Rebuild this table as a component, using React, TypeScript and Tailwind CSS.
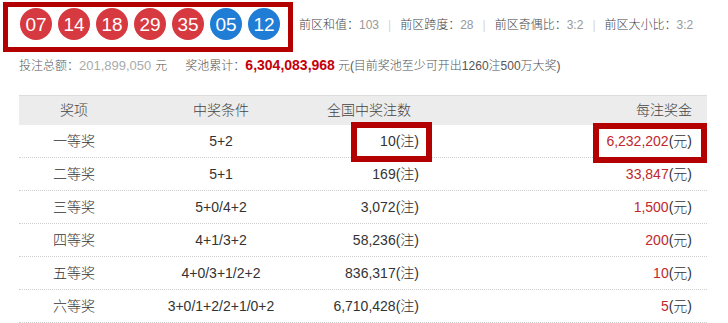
import React from "react";

const FONT = { fontFamily: '"Liberation Sans", Arial, "Noto Sans CJK SC", sans-serif' };

const balls: { n: string; blue?: boolean }[] = [
  { n: "07" },
  { n: "14" },
  { n: "18" },
  { n: "29" },
  { n: "35" },
  { n: "05", blue: true },
  { n: "12", blue: true },
];

const rows = [
  { name: "一等奖", cond: "5+2", count: "10", prize: "6,232,202" },
  { name: "二等奖", cond: "5+1", count: "169", prize: "33,847" },
  { name: "三等奖", cond: "5+0/4+2", count: "3,072", prize: "1,500" },
  { name: "四等奖", cond: "4+1/3+2", count: "58,236", prize: "200" },
  { name: "五等奖", cond: "4+0/3+1/2+2", count: "836,317", prize: "10" },
  { name: "六等奖", cond: "3+0/1+2/2+1/0+2", count: "6,710,428", prize: "5" },
];

function Stat({ label, value }: { label: string; value: string }) {
  return (
    <span>
      <span className="text-[#444]">{label}</span>
      <span className="text-[#999]">{value}</span>
    </span>
  );
}

function Sep() {
  return <span className="mx-[9px] text-[#d6d6d6]">|</span>;
}

export default function App() {
  return (
    <div className="relative w-[728px] h-[323px] overflow-hidden bg-white text-[#333] font-light" style={FONT}>
      <div className="flex items-start pt-[2px]">
        <div className="ml-[3px] w-[290px] h-[50px] border-[5px] border-[#b30000] flex items-start pt-[1px] pl-[12px] gap-[6px]">
          {balls.map((b, i) => (
            <div
              key={i}
              className={`w-[32px] h-[32px] rounded-full flex items-center justify-center text-white text-[19px] font-normal leading-none ${
                b.blue ? "bg-[#1f7dd5]" : "bg-[#d6393f]"
              }`}
            >
              {b.n}
            </div>
          ))}
        </div>
        <div className="ml-[6px] mt-[14px] text-[12px] leading-[18px] whitespace-nowrap">
          <Stat label="前区和值：" value="103" />
          <Sep />
          <Stat label="前区跨度：" value="28" />
          <Sep />
          <Stat label="前区奇偶比：" value="3:2" />
          <Sep />
          <Stat label="前区大小比：" value="3:2" />
        </div>
      </div>

      <div className="mt-[4px] pl-[19px] text-[12px] leading-[18px] whitespace-nowrap text-[#555] flex items-baseline">
        <span>投注总额：</span>
        <span className="text-[#aaa] text-[13px]">201,899,050</span>
        <span className="ml-[4px]">元</span>
        <span className="ml-[18px]">奖池累计：</span>
        <span className="font-bold text-[#c4000b] text-[14px]">6,304,083,968</span>
        <span className="ml-[3px]">元(目前奖池至少可开出1260注500万大奖)</span>
      </div>

      <div className="ml-[19px] mt-[20px] w-[688px] text-[14px]">
        <div className="grid grid-cols-[110px_184px_112px_282px] h-[30px] items-center bg-[#ececec] border-t border-[#dcdcdc] text-[#444]">
          <div className="text-center">奖项</div>
          <div className="text-center">中奖条件</div>
          <div className="text-center">全国中奖注数</div>
          <div className="text-right pr-[15px]">每注奖金</div>
        </div>
        {rows.map((r, i) => (
          <div
            key={i}
            className="grid grid-cols-[110px_184px_112px_282px] h-[33px] items-center border-b border-dotted border-[#cfcfcf]"
          >
            <div className="text-center">{r.name}</div>
            <div className="text-center">{r.cond}</div>
            <div className="text-right pr-[6px]">
              {r.count}(注)
            </div>
            <div className="text-right pr-[15px]">
              <span className="text-[#c1272d]">{r.prize}</span>(元)
            </div>
          </div>
        ))}
      </div>

      <div className="absolute left-[351px] top-[122px] w-[81px] h-[40px] border-[6px] border-[#b30000]" />
      <div className="absolute left-[593px] top-[123px] w-[114px] h-[40px] border-[6px] border-[#b30000]" />
    </div>
  );
}
